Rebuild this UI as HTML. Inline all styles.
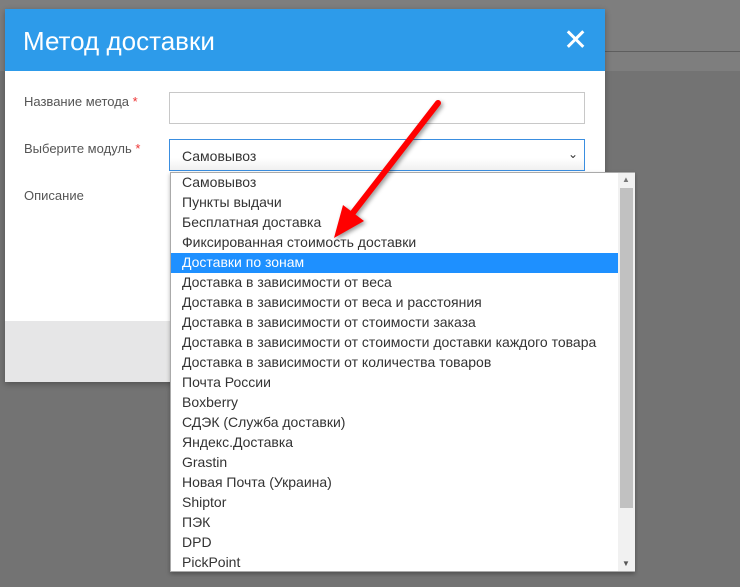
<!DOCTYPE html>
<html><head><meta charset="utf-8"><style>
*{margin:0;padding:0;box-sizing:border-box}
body{width:740px;height:587px;background:#737373;position:relative;overflow:hidden;font-family:"Liberation Sans","DejaVu Sans",sans-serif}
.top{position:absolute;left:0;top:0;width:740px;height:71px;background:#7e7e7e}
.line{position:absolute;left:600px;top:51px;width:140px;height:1px;background:#5e5e5e}
.modal{position:absolute;left:5px;top:9px;width:600px;height:373px;background:#fff;box-shadow:0 2px 6px rgba(0,0,0,.3)}
.hd{height:62px;background:#2d9bea;color:#fff;font-size:26px;padding:17px 0 0 18px}
.x{position:absolute;left:558px;top:14px;font-size:30px;font-weight:bold;color:#fff}
.ft{position:absolute;left:0;top:312px;width:600px;height:61px;background:#e6e6e7}
.lb{position:absolute;left:19px;font-size:13px;color:#555}
.lb b{color:#e33;font-weight:normal}
.in{position:absolute;left:164px;width:416px;height:32px;border:1px solid #c8c8c8;background:#fff}
.sel{border-color:#3a8ee0;font-size:14px;color:#333;padding:8px 0 0 12px;background:linear-gradient(#fff 60%,#f0f0f0)}
.dd{position:absolute;left:170px;top:172px;width:465px;height:400px;background:#fff;border:1px solid #aaa;box-shadow:0 2px 4px rgba(0,0,0,.3);font-size:14px;color:#333}
.it{height:20px;line-height:19px;padding-left:11px;white-space:nowrap;width:447px;overflow:hidden}
.it.h{background:#1e90ff;color:#fff}
.sb{position:absolute;left:447px;top:0;width:17px;height:398px;background:#f1f1f1}
.th{position:absolute;left:2px;top:15px;width:13px;height:320px;background:#c1c1c1}
</style></head><body>
<div class="top"></div><div class="line"></div>
<div class="modal">
<div class="hd">Метод доставки</div><div class="x">✕</div>
<div class="lb" style="top:85px">Название метода <b>*</b></div>
<div class="lb" style="top:132px">Выберите модуль <b>*</b></div>
<div class="lb" style="top:179px">Описание</div>
<div class="in" style="top:83px"></div>
<div class="in sel" style="top:130px">Самовывоз<span style="position:absolute;right:6px;top:7px;font-size:12px">⌄</span></div>
<div class="ft"></div>
</div>
<div class="dd">
<div class="it">Самовывоз</div><div class="it">Пункты выдачи</div><div class="it">Бесплатная доставка</div><div class="it">Фиксированная стоимость доставки</div>
<div class="it h">Доставки по зонам</div>
<div class="it">Доставка в зависимости от веса</div><div class="it">Доставка в зависимости от веса и расстояния</div><div class="it">Доставка в зависимости от стоимости заказа</div><div class="it">Доставка в зависимости от стоимости доставки каждого товара</div><div class="it">Доставка в зависимости от количества товаров</div><div class="it">Почта России</div><div class="it">Boxberry</div><div class="it">СДЭК (Служба доставки)</div><div class="it">Яндекс.Доставка</div><div class="it">Grastin</div><div class="it">Новая Почта (Украина)</div><div class="it">Shiptor</div><div class="it">ПЭК</div><div class="it">DPD</div><div class="it">PickPoint</div>
<div class="sb"><div class="th"></div><span style="position:absolute;left:4px;top:2px;font-size:8px;color:#777">▲</span><span style="position:absolute;left:4px;top:386px;font-size:8px;color:#555">▼</span></div>
</div>
<svg style="position:absolute;left:0;top:0" width="740" height="587"><g filter="drop-shadow(2px 2px 2px rgba(0,0,0,.4))"><line x1="438" y1="103" x2="352" y2="214" stroke="#f00" stroke-width="6" stroke-linecap="round"/><polygon points="334,238 343,205 364,221" fill="#f00"/></g></svg>
</body></html>
